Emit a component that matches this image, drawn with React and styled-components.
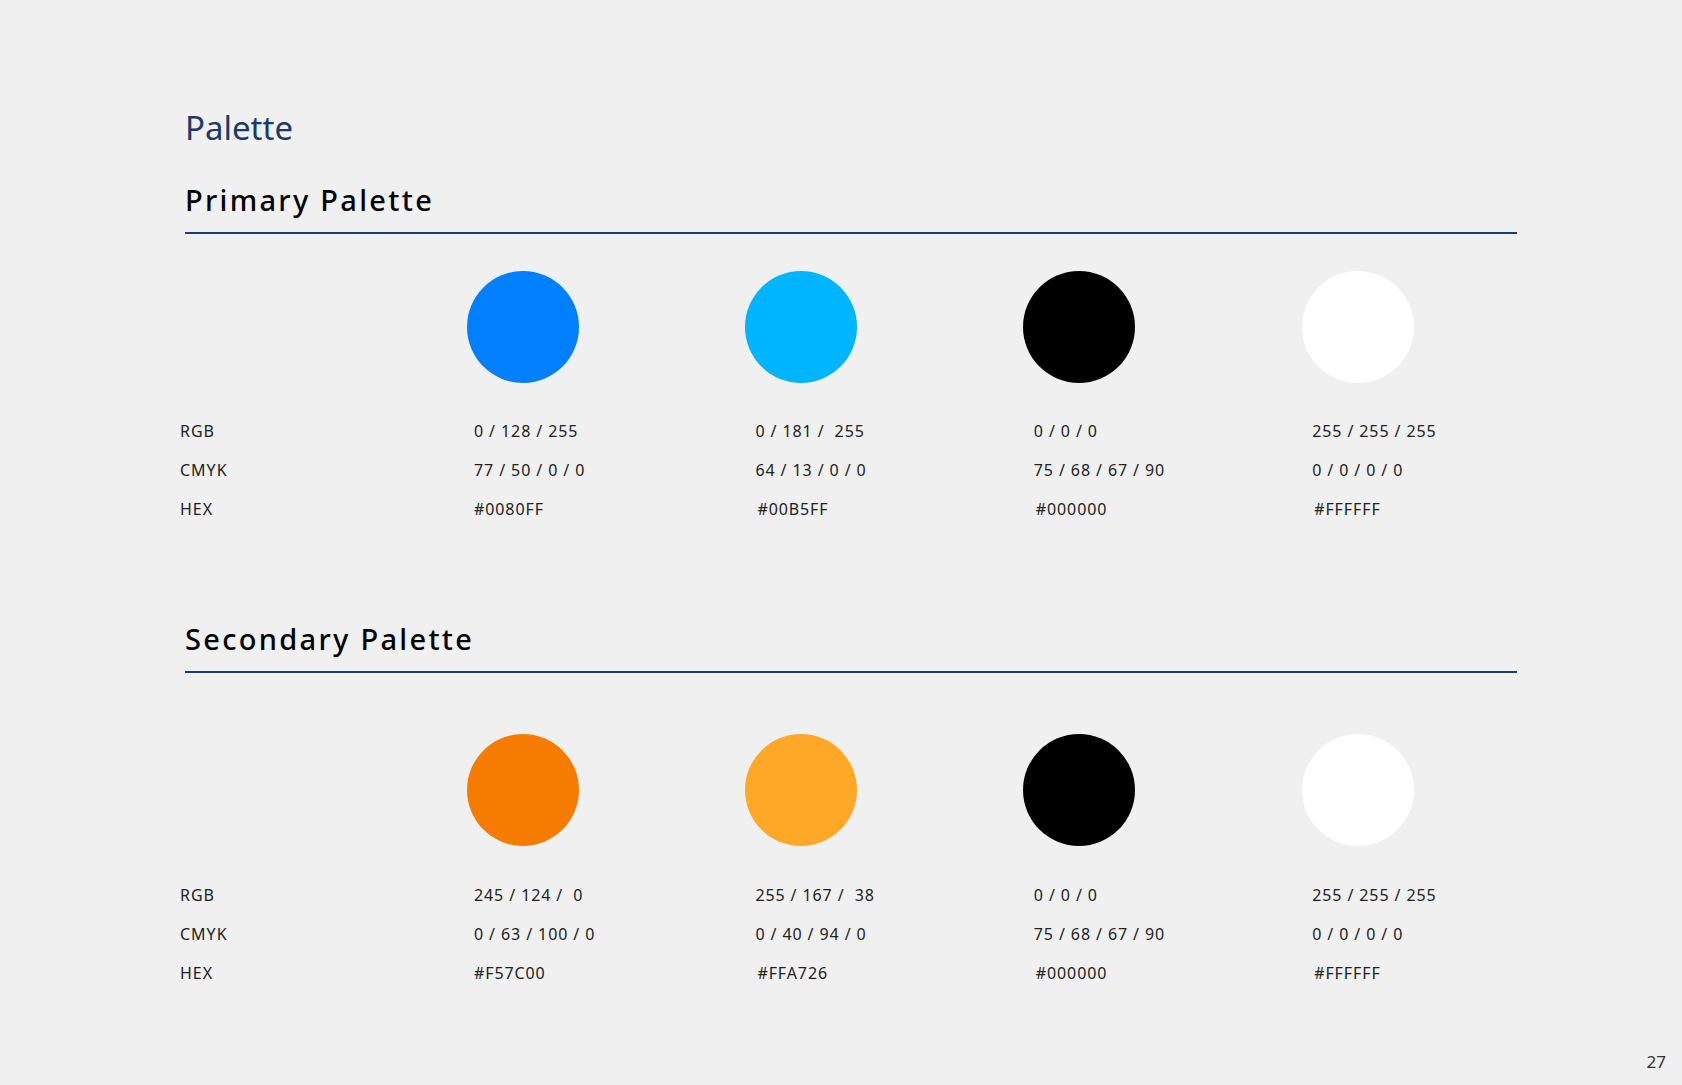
import React from 'react';
import styled, { createGlobalStyle } from 'styled-components';

const primary = [
  { color: '#0080FF', rgb: '0 / 128 / 255', cmyk: '77 / 50 / 0 / 0', hex: '#0080FF' },
  { color: '#00B5FF', rgb: '0 / 181 /  255', cmyk: '64 / 13 / 0 / 0', hex: '#00B5FF' },
  { color: '#000000', rgb: '0 / 0 / 0', cmyk: '75 / 68 / 67 / 90', hex: '#000000' },
  { color: '#FFFFFF', rgb: '255 / 255 / 255', cmyk: '0 / 0 / 0 / 0', hex: '#FFFFFF' },
];

const secondary = [
  { color: '#F57C00', rgb: '245 / 124 /  0', cmyk: '0 / 63 / 100 / 0', hex: '#F57C00' },
  { color: '#FFA726', rgb: '255 / 167 /  38', cmyk: '0 / 40 / 94 / 0', hex: '#FFA726' },
  { color: '#000000', rgb: '0 / 0 / 0', cmyk: '75 / 68 / 67 / 90', hex: '#000000' },
  { color: '#FFFFFF', rgb: '255 / 255 / 255', cmyk: '0 / 0 / 0 / 0', hex: '#FFFFFF' },
];

const GlobalStyle = createGlobalStyle`
  html, body {
    margin: 0;
    padding: 0;
    background: #f0f0f0;
  }
  body {
    font-family: "Noto Sans", "Open Sans", sans-serif;
    color: #222;
  }
`;

function PaletteSection({ title, swatches, gapTop, gapRows }) {
  return (
    <Section>
      <Heading>{title}</Heading>
      <SwatchGrid $gapTop={gapTop}>
        <span />
        {swatches.map((s, i) => (
          <Circle key={i} $color={s.color} $gapRows={gapRows} />
        ))}
        <Label>RGB</Label>
        {swatches.map((s, i) => (
          <Value key={i} $col={i}>{s.rgb}</Value>
        ))}
        <Label>CMYK</Label>
        {swatches.map((s, i) => (
          <Value key={i} $col={i}>{s.cmyk}</Value>
        ))}
        <Label>HEX</Label>
        {swatches.map((s, i) => (
          <Value key={i} $col={i} $hex>{s.hex}</Value>
        ))}
      </SwatchGrid>
    </Section>
  );
}

export default function App() {
  return (
    <>
      <GlobalStyle />
      <Page>
        <Content>
          <Title>Palette</Title>
          <PaletteSection title="Primary Palette" swatches={primary} gapTop={37} gapRows={29} />
          <PaletteSection title="Secondary Palette" swatches={secondary} gapTop={61} gapRows={30} />
        </Content>
        <PageNumber>27</PageNumber>
      </Page>
    </>
  );
}

const Page = styled.div`
  min-height: 100vh;
  display: flex;
  flex-direction: column;
  box-sizing: border-box;
`;

const Content = styled.div`
  padding: 108px 0 0 180px;
  width: 1337px;
  display: flex;
  flex-direction: column;
  gap: 35px;
`;

const Title = styled.h1`
  margin: 0 0 0 5px;
  font-size: 33px;
  line-height: 40px;
  font-weight: 400;
  color: #1b3a68;
`;

const Section = styled.section`
  display: flex;
  flex-direction: column;
  & + & {
    margin-top: 58px;
  }
`;

const Heading = styled.h2`
  margin: 0 0 0 5px;
  padding-bottom: 15px;
  border-bottom: 2px solid #1f3d6b;
  font-size: 29px;
  line-height: 34px;
  font-weight: 500;
  letter-spacing: 2.3px;
  color: #000;
`;

const SwatchGrid = styled.div`
  display: grid;
  grid-template-columns: 286.5px repeat(4, 278.4px);
  margin-top: ${(p) => p.$gapTop}px;
  align-items: start;
`;

const Circle = styled.div`
  width: 112px;
  height: 112px;
  border-radius: 50%;
  background: ${(p) => p.$color};
  margin-bottom: ${(p) => p.$gapRows}px;
`;

const Label = styled.div`
  font-size: 16px;
  line-height: 39px;
  letter-spacing: 1px;
  color: #222;
`;

const Value = styled.div`
  font-size: 16px;
  line-height: 39px;
  letter-spacing: 0.9px;
  color: #222;
  white-space: pre;
  padding-left: ${(p) => (p.$col === 0 ? 7.5 : p.$hex ? 12.5 : 10.5)}px;
`;

const PageNumber = styled.div`
  margin-top: auto;
  align-self: flex-end;
  padding: 0 16px 13px 0;
  font-size: 17px;
  line-height: 20px;
  color: #333;
`;
